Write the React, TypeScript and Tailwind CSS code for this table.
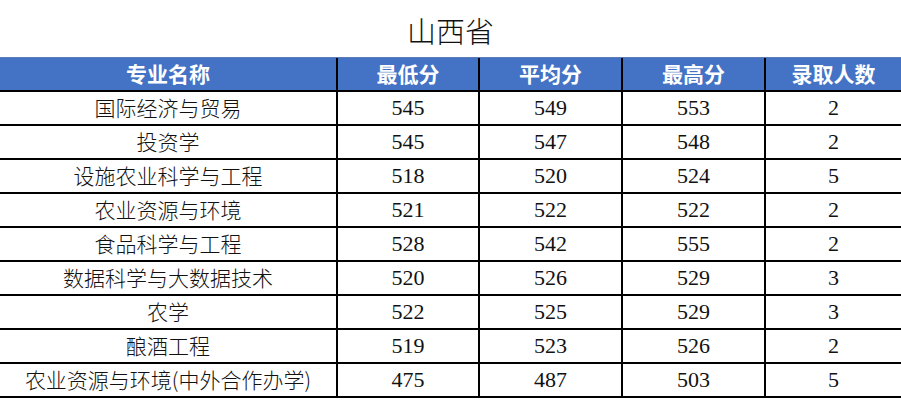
import React from 'react';

const rows: [string, number, number, number, number][] = [
  ['国际经济与贸易', 545, 549, 553, 2],
  ['投资学', 545, 547, 548, 2],
  ['设施农业科学与工程', 518, 520, 524, 5],
  ['农业资源与环境', 521, 522, 522, 2],
  ['食品科学与工程', 528, 542, 555, 2],
  ['数据科学与大数据技术', 520, 526, 529, 3],
  ['农学', 522, 525, 529, 3],
  ['酿酒工程', 519, 523, 526, 2],
  ['农业资源与环境(中外合作办学)', 475, 487, 503, 5],
];

const headers = ['专业名称', '最低分', '平均分', '最高分', '录取人数'];

const grid = 'grid grid-cols-[338px_142px_143px_143px_1fr]';

export default function App() {
  return (
    <div className="w-[901px] h-[401px] bg-white overflow-hidden font-['Noto_Sans_CJK_SC',sans-serif]">
      {/* Title */}
      <div className="h-[57px] flex items-center justify-center pt-[3px]">
        <h1 className="text-[29px] leading-none text-[#111] font-light">山西省</h1>
      </div>

      {/* Header */}
      <div className={`${grid} h-[35px] bg-[#4472c4] border-b-2 border-black border-t border-t-[#5b7cb8]`}>
        {headers.map((h, i) => (
          <div
            key={h}
            className={`flex items-center justify-center text-white text-[21px] font-bold ${
              i < 4 ? 'border-r-2 border-black' : ''
            }`}
          >
            {h}
          </div>
        ))}
      </div>

      {/* Rows */}
      {rows.map((r) => (
        <div key={r[0]} className={`${grid} h-[34px] border-b-2 border-black`}>
          <div className="flex items-center justify-center text-[#111] text-[21px] font-light border-r-2 border-black">
            {r[0]}
          </div>
          {r.slice(1).map((n, i) => (
            <div
              key={i}
              className={`flex items-center justify-center text-[#111] ${i < 3 ? 'border-r-2 border-black' : ''}`}
            >
              <span className="font-['Liberation_Serif','Times_New_Roman',serif] text-[22px] leading-none">
                {n}
              </span>
            </div>
          ))}
        </div>
      ))}
    </div>
  );
}
